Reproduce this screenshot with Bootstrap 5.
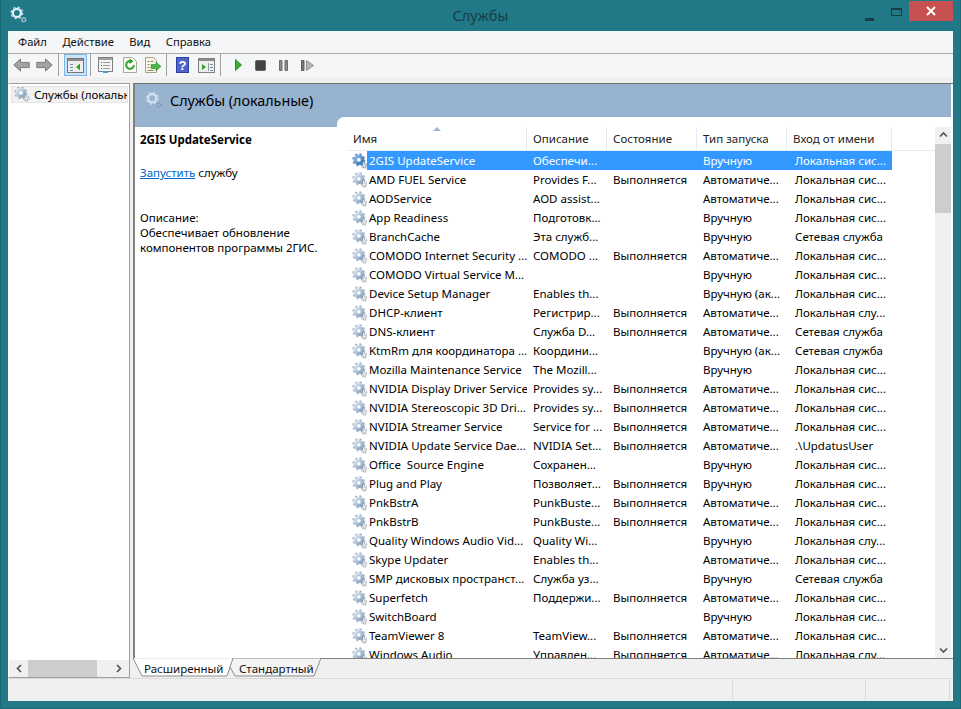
<!DOCTYPE html>
<html lang="ru"><head><meta charset="utf-8"><title>Службы</title>
<link href="https://cdn.jsdelivr.net/npm/bootstrap@5.3.0/dist/css/bootstrap.min.css" rel="stylesheet">
<style>
html,body{margin:0;height:709px;overflow:hidden;background:#217886}
body{font-family:"Noto Sans",sans-serif;font-size:11.5px;line-height:15px;color:#000}
.win{height:709px;padding:0 7px 7px;border:1px solid #1c6a77;border-top:0;margin:0}
.titlebar{height:31px;color:#163f47;font-size:14.5px}
.titlebar>.side{flex:1 1 0}
.winicon{width:17px;height:17px;margin:-2px 0 0 2px}
.ctl-min{width:9px;height:3px;background:#1b3c44;margin:7px 17px 0 0}
.ctl-max{width:11px;height:8px;border:1px solid #1b3c44;border-top-width:2px;margin:-7px 7px 0 0}
.ctl-close{width:44px;height:20px;background:#c75050;margin:-9px 0 0 0}
.client{height:670px;background:#f0f0f0}
.menubar{height:23px;background:#f5f6f7;border-bottom:1px solid #acacac;padding-left:10px;gap:15.5px;color:#111;font-size:11.2px}
.toolbar{height:24px;background:#f5f6f7;padding-left:2px}
.tb{width:23px;height:22px;flex:none}
.tb.narrow{width:22px}
.tb.active{background:#cce4f7;border:1px solid #7eb4ea}
.sep{width:1px;height:22px;background:#a0a0a0;flex:none}
.ml1{margin-left:1px}.ml2{margin-left:2px}.ml3{margin-left:3px}.ml4{margin-left:4px}.ml5{margin-left:5px}.ml6{margin-left:6px}
.workspace{height:601px;padding-top:6px;gap:3px}
.tree{width:122px;flex:none;background:#fff;border:1px solid #a0a0a0;border-left-color:#fff;height:595px}
.tree-item{height:17px;margin:2px 1px 0 2px;padding:0 0 1px 2px;background:#f2f2f2;border:1px solid #e4e4e4;overflow:hidden;white-space:nowrap;gap:4px}
.tree-spacer{flex:1}
.hscroll{height:17px;background:#f0f0f0;padding:0 2px}
.hthumb{width:69px;height:17px;background:#cdcdcd;margin-left:12px}
.right{width:820px;flex:none;height:595px}
.pane{height:575px;border-left:2px solid #808080;border-top:1px solid #6e6e6e;background:#fff;margin-right:0}
.band{height:33px;background:#98b3d0;font-size:14.3px;padding-left:10px;gap:8px;margin-right:2px}
.band-icon{width:17px;height:17px;margin-top:-2px}
.paneBody{height:541px;background:#98b3d0;margin-right:2px}
.desc{width:202px;flex:none;margin-top:10px;background:#fff;padding:5px 5px}
.desc-title{font-weight:700;margin-bottom:18px}
.desc a{color:#0066cc}
.desc-link{margin-bottom:30px}
.listwrap{flex:1 1 0;background:#fff;border-top-left-radius:7px;padding:10px 0 0 10px;overflow:hidden}
.listclip{width:588px;flex:none;height:531px;overflow:hidden;position:relative}
.caret-sort{position:absolute;left:86px;top:0;width:0;height:0;border-left:4px solid transparent;border-right:4px solid transparent;border-bottom:4px solid #9db6cf}
.svc{table-layout:fixed;width:588px;margin:0;font-size:11.5px;--bs-table-bg:transparent;border-collapse:separate;border-spacing:0}
.svc th,.svc td{padding:0 0 0 6px;height:19px;line-height:17px;white-space:nowrap;overflow:hidden;font-weight:400;border:0;color:#000;vertical-align:middle}
.svc th{height:24px;border-right:1px solid #e5ecf5;border-bottom:1px solid #e5ecf5;color:#222}
.svc th:last-child{border-right:0}
.svc td.ic{padding:0 0 0 5px}
.svc td.nm{padding-left:2px}
.svc td.lg{padding-left:8px}
.svc tr.sel td:not(.ic):not(.e){background:#3399ff;color:#fff}
.gear{width:16px;height:16px;display:block}
.c-ic{width:20px}.c-nm{width:160px}.c-d{width:80px}.c-s,.c-t{width:90px}.c-l{width:105px}.c-e{width:43px}
.vscroll{width:16px;flex:none;background:#f0f0f0;height:531px;padding-top:17px;position:relative}
.vthumb{height:69px;background:#cdcdcd}
.chev{position:absolute;left:4px}
.tabs{height:20px;position:relative;background:#f0f0f0;border-top:1px solid #808080;box-sizing:border-box}
.tabs svg.bg{position:absolute;left:0;top:-1px;width:190px;height:20px}
.tab{position:relative;height:19px;padding-top:2px;color:#111}
.tab1{margin-left:11px;width:95px}
.tab2{width:90px}
.status{height:23px;background:#f0f0f0;border-top:1px solid #dadada}
.st{border-left:1px solid #dadada;height:20px;margin-top:1px}
.status .st1{margin-left:724px;width:133px}
.status .st2{width:85px;border-right:1px solid #dadada}
</style></head><body>
<svg width="0" height="0" class="position-absolute">
<defs>
<linearGradient id="g1" x1="0" y1="0" x2="1" y2="1"><stop offset="0" stop-color="#e2ebf4"/><stop offset="1" stop-color="#7f9cbc"/></linearGradient>
<linearGradient id="g2" x1="0" y1="0" x2="1" y2="1"><stop offset="0" stop-color="#8fbdee"/><stop offset="1" stop-color="#2f6db5"/></linearGradient>
<symbol id="gear" viewBox="0 0 16 16">
<circle cx="6.8" cy="6.8" r="5.6" fill="none" stroke="#a3b7cc" stroke-width="1.900" stroke-dasharray="2.2 2.2"/>
<circle cx="6.8" cy="6.8" r="3.900" fill="#fff" stroke="url(#g1)" stroke-width="2.800"/>
<circle cx="6.8" cy="6.8" r="2.300" fill="#fff" stroke="#8aa3bd" stroke-width=".7"/>
<circle cx="12.4" cy="12.4" r="2.600" fill="none" stroke="#9aa4ae" stroke-width="1.300" stroke-dasharray="1.300 1"/>
<circle cx="12.4" cy="12.4" r="1.600" fill="#eef2f5" stroke="#a3adb6" stroke-width=".6"/>
</symbol>
<symbol id="gearSel" viewBox="0 0 16 16">
<circle cx="6.8" cy="6.8" r="5.6" fill="none" stroke="#5a8fcb" stroke-width="1.900" stroke-dasharray="2.2 2.2"/>
<circle cx="6.8" cy="6.8" r="3.900" fill="#fff" stroke="url(#g2)" stroke-width="2.800"/>
<circle cx="6.8" cy="6.8" r="2.300" fill="#fff" stroke="#3f74b0" stroke-width=".7"/>
<circle cx="12.4" cy="12.4" r="2.600" fill="none" stroke="#6f90b3" stroke-width="1.300" stroke-dasharray="1.300 1"/>
<circle cx="12.4" cy="12.4" r="1.600" fill="#dbe7f2" stroke="#7f9cb8" stroke-width=".6"/>
</symbol>
<symbol id="gearW" viewBox="0 0 16 16">
<circle cx="6.500" cy="6.500" r="5.400" fill="none" stroke="#c5dde8" stroke-width="1.300" stroke-dasharray="2.100 2.140"/>
<circle cx="6.500" cy="6.500" r="3.800" fill="none" stroke="#e3eff6" stroke-width="2.200"/>
<circle cx="13" cy="13" r="1.800" fill="none" stroke="#8fb3bd" stroke-width="1.500"/>
</symbol>
<symbol id="gearB" viewBox="0 0 16 16">
<circle cx="6.800" cy="6.800" r="5.500" fill="none" stroke="#c0d5e8" stroke-width="1.500" stroke-dasharray="2.160 2.160"/>
<circle cx="6.800" cy="6.800" r="3.900" fill="none" stroke="#cfe0ef" stroke-width="2.300"/>
<circle cx="13" cy="13" r="2" fill="none" stroke="#7f97b2" stroke-width="1.500" stroke-dasharray="1.300 .8"/>
</symbol>
</defs></svg>
<div class="win d-flex flex-column">
 <div class="titlebar d-flex align-items-center">
  <div class="side d-flex"><svg class="winicon"><use href="#gearW"/></svg></div>
  <div>Службы</div>
  <div class="side d-flex justify-content-end align-items-center">
   <div class="ctl-min"></div><div class="ctl-max"></div>
   <div class="ctl-close d-flex align-items-center justify-content-center"><svg width="10" height="10" viewBox="0 0 10 10"><path d="M1 1l8 8M9 1l-8 8" stroke="#fff" stroke-width="2"/></svg></div>
  </div>
 </div>
 <div class="client d-flex flex-column">
  <nav class="menubar d-flex align-items-center"><span>Файл</span><span>Действие</span><span>Вид</span><span>Справка</span></nav>
  <div class="toolbar d-flex align-items-center">
   <div class="tb narrow d-flex align-items-center justify-content-center"><svg width="17" height="14" viewBox="0 0 17 14"><path d="M.8 7 7.500 1v3.400h8.700v5.200H7.500V13z" fill="#a3a3a3" stroke="#7a7a7a"/></svg></div>
   <div class="tb ml1 d-flex align-items-center justify-content-center"><svg width="17" height="14" viewBox="0 0 17 14"><path d="M16.200 7 9.500 1v3.400H.8v5.200h8.700V13z" fill="#a3a3a3" stroke="#7a7a7a"/></svg></div>
   <div class="sep ml2"></div>
   <div class="tb active ml5 d-flex align-items-center justify-content-center"><svg width="17" height="15" viewBox="0 0 17 15"><rect x=".5" y=".5" width="16" height="14" fill="#eee" stroke="#777"/><rect x="1" y="1" width="15" height="2" fill="#8c8c8c"/><path d="M3 6h3v1H3zM3 9h3v1H3zM3 12h3v1H3z" fill="#6f8fa5"/><path d="M13 5.500v7L9 9z" fill="#2aa52a"/></svg></div>
   <div class="sep ml3"></div>
   <div class="tb ml3 d-flex align-items-center justify-content-center"><svg width="15" height="16" viewBox="0 0 15 16"><rect x=".5" y=".5" width="14" height="14" fill="#f4f4f4" stroke="#808080"/><rect x="1" y="1" width="13" height="2" fill="#a0a0a0"/><path d="M3 5h1v1H3zM3 8h1v1H3zM3 11h1v1H3z" fill="#2f6db5"/><path d="M5 5h7v1H5zM5 8h7v1H5zM5 11h7v1H5z" fill="#9a9a9a"/><rect x="5" y="14" width="5" height="2" fill="#35a5e8"/></svg></div>
   <div class="tb ml1 d-flex align-items-center justify-content-center"><svg width="14" height="16" viewBox="0 0 14 16"><path d="M.5.500h9l4 4v11H.5z" fill="#fbfbf2" stroke="#a8a8a0"/><path d="M7 4.200a3.800 3.800 0 1 0 3.800 3.800" fill="none" stroke="#3aa53a" stroke-width="2.200"/><path d="M6.500 1.500 10.500 4.300 6.500 7z" fill="#2e9a2e"/></svg></div>
   <div class="tb d-flex align-items-center justify-content-center"><svg width="16" height="16" viewBox="0 0 16 16"><path d="M.5.500h8l3 3v12H.5z" fill="#fbf6e0" stroke="#a8a088"/><path d="M2.500 4h2v1h-2zM2.500 7h2v1h-2zM2.500 10h2v1h-2zM5.500 4h3v1h-3zM2.500 13h6v1h-6z" fill="#8a8a7a"/><path d="M6 7.500h5V5l5 4.500L11 14v-2.500H6z" fill="#49b54a" stroke="#2e8f30" stroke-width=".6"/></svg></div>
   <div class="sep ml2"></div>
   <div class="tb ml4 d-flex align-items-center justify-content-center"><svg width="13" height="16" viewBox="0 0 13 16"><rect width="13" height="16" fill="#2b3fa8"/><rect x="1" y="1" width="11" height="14" fill="#4d63c7"/><text x="6.500" y="13" text-anchor="middle" font-family="Liberation Sans,sans-serif" font-weight="700" font-size="13" fill="#fff">?</text></svg></div>
   <div class="tb ml1 d-flex align-items-center justify-content-center"><svg width="17" height="15" viewBox="0 0 17 15"><rect x=".5" y=".5" width="16" height="14" fill="#eee" stroke="#808080"/><rect x="1" y="1" width="15" height="2" fill="#8c8c8c"/><path d="M4 6v6l4-3z" fill="#2aa52a"/><path d="M10 5h1v8h-1z" fill="#999"/><path d="M12 6h3v1h-3zM12 9h3v1h-3zM12 12h3v1h-3z" fill="#6f8fa5"/></svg></div>
   <div class="sep ml2"></div>
   <div class="tb narrow ml6 d-flex align-items-center justify-content-center"><svg width="7" height="12" viewBox="0 0 7 12"><path d="M.5.500v11L6.500 6z" fill="#35b035" stroke="#268f26"/></svg></div>
   <div class="tb d-flex align-items-center justify-content-center"><svg width="11" height="11" viewBox="0 0 11 11"><rect x=".5" y=".5" width="10" height="10" rx="1" fill="#444" stroke="#666"/></svg></div>
   <div class="tb d-flex align-items-center justify-content-center"><svg width="9" height="11" viewBox="0 0 9 11"><path d="M.5.500h2.500v10H.5zM6 .5h2.500v10H6z" fill="#8a8a8a" stroke="#6c6c6c"/></svg></div>
   <div class="tb ml1 d-flex align-items-center justify-content-center"><svg width="13" height="11" viewBox="0 0 13 11"><path d="M.5.500h2.500v10H.5z" fill="#777" stroke="#5c5c5c"/><path d="M5.500.5v10l7-5z" fill="#b5b5b5" stroke="#8e8e8e"/></svg></div>
  </div>
  <div class="workspace d-flex">
   <div class="tree d-flex flex-column">
    <div class="tree-item d-flex align-items-center"><svg class="gear flex-shrink-0"><use href="#gear"/></svg><span>Службы (локальные)</span></div>
    <div class="tree-spacer"></div>
    <div class="hscroll d-flex align-items-center">
     <svg class="flex-shrink-0 ms-1" width="9" height="9" viewBox="0 0 9 9"><path d="M6 1 2.500 4.500 6 8" fill="none" stroke="#555" stroke-width="1.700"/></svg>
     <div class="hthumb flex-shrink-0 ms-1"></div>
     <svg class="flex-shrink-0 ms-auto me-1" width="9" height="9" viewBox="0 0 9 9"><path d="M3 1 6.500 4.500 3 8" fill="none" stroke="#555" stroke-width="1.700"/></svg>
    </div>
   </div>
   <div class="right d-flex flex-column">
    <div class="pane d-flex flex-column">
     <div class="band d-flex align-items-center"><svg class="band-icon"><use href="#gearB"/></svg><span>Службы (локальные)</span></div>
     <div class="paneBody d-flex">
      <div class="desc">
       <div class="desc-title">2GIS UpdateService</div>
       <div class="desc-link"><a href="#">Запустить</a> службу</div>
       <div>Описание:<br>Обеспечивает обновление<br>компонентов программы 2ГИС.</div>
      </div>
      <div class="listwrap d-flex">
       <div class="listclip">
        <table class="table svc">
         <colgroup><col class="c-ic"><col class="c-nm"><col class="c-d"><col class="c-s"><col class="c-t"><col class="c-l"><col class="c-e"></colgroup>
         <thead><tr><th colspan="2">Имя</th><th>Описание</th><th>Состояние</th><th>Тип запуска</th><th>Вход от имени</th><th></th></tr></thead>
         <tbody>
<tr class="sel"><td class="ic"><svg class="gear"><use href="#gearSel"/></svg></td><td class="nm">2GIS UpdateService</td><td>Обеспечи...</td><td></td><td>Вручную</td><td class="lg">Локальная сис...</td><td class="e"></td></tr>
<tr><td class="ic"><svg class="gear"><use href="#gear"/></svg></td><td class="nm">AMD FUEL Service</td><td>Provides F...</td><td>Выполняется</td><td>Автоматиче...</td><td class="lg">Локальная сис...</td><td class="e"></td></tr>
<tr><td class="ic"><svg class="gear"><use href="#gear"/></svg></td><td class="nm">AODService</td><td>AOD assist...</td><td></td><td>Автоматиче...</td><td class="lg">Локальная сис...</td><td class="e"></td></tr>
<tr><td class="ic"><svg class="gear"><use href="#gear"/></svg></td><td class="nm">App Readiness</td><td>Подготовк...</td><td></td><td>Вручную</td><td class="lg">Локальная сис...</td><td class="e"></td></tr>
<tr><td class="ic"><svg class="gear"><use href="#gear"/></svg></td><td class="nm">BranchCache</td><td>Эта служб...</td><td></td><td>Вручную</td><td class="lg">Сетевая служба</td><td class="e"></td></tr>
<tr><td class="ic"><svg class="gear"><use href="#gear"/></svg></td><td class="nm">COMODO Internet Security ...</td><td>COMODO ...</td><td>Выполняется</td><td>Автоматиче...</td><td class="lg">Локальная сис...</td><td class="e"></td></tr>
<tr><td class="ic"><svg class="gear"><use href="#gear"/></svg></td><td class="nm">COMODO Virtual Service M...</td><td></td><td></td><td>Вручную</td><td class="lg">Локальная сис...</td><td class="e"></td></tr>
<tr><td class="ic"><svg class="gear"><use href="#gear"/></svg></td><td class="nm">Device Setup Manager</td><td>Enables th...</td><td></td><td>Вручную (ак...</td><td class="lg">Локальная сис...</td><td class="e"></td></tr>
<tr><td class="ic"><svg class="gear"><use href="#gear"/></svg></td><td class="nm">DHCP-клиент</td><td>Регистрир...</td><td>Выполняется</td><td>Автоматиче...</td><td class="lg">Локальная слу...</td><td class="e"></td></tr>
<tr><td class="ic"><svg class="gear"><use href="#gear"/></svg></td><td class="nm">DNS-клиент</td><td>Служба D...</td><td>Выполняется</td><td>Автоматиче...</td><td class="lg">Сетевая служба</td><td class="e"></td></tr>
<tr><td class="ic"><svg class="gear"><use href="#gear"/></svg></td><td class="nm">KtmRm для координатора ...</td><td>Координи...</td><td></td><td>Вручную (ак...</td><td class="lg">Сетевая служба</td><td class="e"></td></tr>
<tr><td class="ic"><svg class="gear"><use href="#gear"/></svg></td><td class="nm">Mozilla Maintenance Service</td><td>The Mozill...</td><td></td><td>Вручную</td><td class="lg">Локальная сис...</td><td class="e"></td></tr>
<tr><td class="ic"><svg class="gear"><use href="#gear"/></svg></td><td class="nm">NVIDIA Display Driver Service</td><td>Provides sy...</td><td>Выполняется</td><td>Автоматиче...</td><td class="lg">Локальная сис...</td><td class="e"></td></tr>
<tr><td class="ic"><svg class="gear"><use href="#gear"/></svg></td><td class="nm">NVIDIA Stereoscopic 3D Dri...</td><td>Provides sy...</td><td>Выполняется</td><td>Автоматиче...</td><td class="lg">Локальная сис...</td><td class="e"></td></tr>
<tr><td class="ic"><svg class="gear"><use href="#gear"/></svg></td><td class="nm">NVIDIA Streamer Service</td><td>Service for ...</td><td>Выполняется</td><td>Автоматиче...</td><td class="lg">Локальная сис...</td><td class="e"></td></tr>
<tr><td class="ic"><svg class="gear"><use href="#gear"/></svg></td><td class="nm">NVIDIA Update Service Dae...</td><td>NVIDIA Set...</td><td>Выполняется</td><td>Автоматиче...</td><td class="lg">.\UpdatusUser</td><td class="e"></td></tr>
<tr><td class="ic"><svg class="gear"><use href="#gear"/></svg></td><td class="nm">Office &nbsp;Source Engine</td><td>Сохранен...</td><td></td><td>Вручную</td><td class="lg">Локальная сис...</td><td class="e"></td></tr>
<tr><td class="ic"><svg class="gear"><use href="#gear"/></svg></td><td class="nm">Plug and Play</td><td>Позволяет...</td><td>Выполняется</td><td>Вручную</td><td class="lg">Локальная сис...</td><td class="e"></td></tr>
<tr><td class="ic"><svg class="gear"><use href="#gear"/></svg></td><td class="nm">PnkBstrA</td><td>PunkBuste...</td><td>Выполняется</td><td>Автоматиче...</td><td class="lg">Локальная сис...</td><td class="e"></td></tr>
<tr><td class="ic"><svg class="gear"><use href="#gear"/></svg></td><td class="nm">PnkBstrB</td><td>PunkBuste...</td><td>Выполняется</td><td>Автоматиче...</td><td class="lg">Локальная сис...</td><td class="e"></td></tr>
<tr><td class="ic"><svg class="gear"><use href="#gear"/></svg></td><td class="nm">Quality Windows Audio Vid...</td><td>Quality Wi...</td><td></td><td>Вручную</td><td class="lg">Локальная слу...</td><td class="e"></td></tr>
<tr><td class="ic"><svg class="gear"><use href="#gear"/></svg></td><td class="nm">Skype Updater</td><td>Enables th...</td><td></td><td>Автоматиче...</td><td class="lg">Локальная сис...</td><td class="e"></td></tr>
<tr><td class="ic"><svg class="gear"><use href="#gear"/></svg></td><td class="nm">SMP дисковых пространст...</td><td>Служба уз...</td><td></td><td>Вручную</td><td class="lg">Сетевая служба</td><td class="e"></td></tr>
<tr><td class="ic"><svg class="gear"><use href="#gear"/></svg></td><td class="nm">Superfetch</td><td>Поддержи...</td><td>Выполняется</td><td>Автоматиче...</td><td class="lg">Локальная сис...</td><td class="e"></td></tr>
<tr><td class="ic"><svg class="gear"><use href="#gear"/></svg></td><td class="nm">SwitchBoard</td><td></td><td></td><td>Вручную</td><td class="lg">Локальная сис...</td><td class="e"></td></tr>
<tr><td class="ic"><svg class="gear"><use href="#gear"/></svg></td><td class="nm">TeamViewer 8</td><td>TeamView...</td><td>Выполняется</td><td>Автоматиче...</td><td class="lg">Локальная сис...</td><td class="e"></td></tr>
<tr><td class="ic"><svg class="gear"><use href="#gear"/></svg></td><td class="nm">Windows Audio</td><td>Управлен...</td><td>Выполняется</td><td>Автоматиче...</td><td class="lg">Локальная слу...</td><td class="e"></td></tr>
         </tbody>
        </table>
        <div class="caret-sort"></div>
       </div>
       <div class="vscroll">
        <svg class="chev top-0 mt-1" width="9" height="7" viewBox="0 0 9 7"><path d="M1 5.500 4.500 2 8 5.500" fill="none" stroke="#555" stroke-width="1.700"/></svg>
        <div class="vthumb"></div>
        <svg class="chev bottom-0 mb-1" width="9" height="7" viewBox="0 0 9 7"><path d="M1 1.500 4.500 5 8 1.500" fill="none" stroke="#555" stroke-width="1.700"/></svg>
       </div>
      </div>
     </div>
    </div>
    <div class="tabs d-flex">
     <svg class="bg" viewBox="0 0 190 20"><path d="M0 0 9 18H94L100 0z" fill="#fff"/><path d="M100 0H188L181 18H102L97 9z" fill="#f4f4f4"/><path d="M0 0H100" stroke="#dcdcdc" stroke-width="1"/><path d="M0 0 9 18H94L100 0H188L181 18H102L97 9" fill="none" stroke="#808080" stroke-width=".9"/></svg>
     <div class="tab tab1">Расширенный</div><div class="tab tab2">Стандартный</div>
    </div>
   </div>
  </div>
  <div class="status d-flex"><div class="st st1"></div><div class="st st2"></div></div>
 </div>
</div>
</body></html>
